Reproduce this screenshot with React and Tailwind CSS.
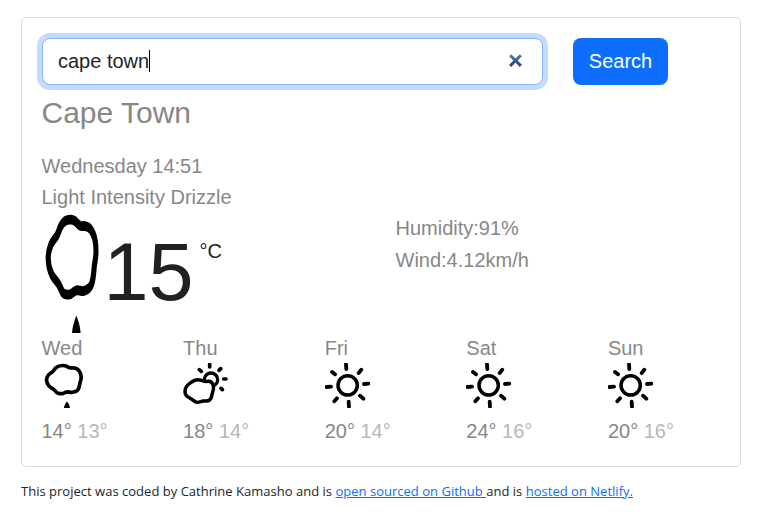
import React from "react";

function Drizzle({ className }) {
  return (
    <svg viewBox="0 0 45 45" preserveAspectRatio="none" className={className}>
      <path
        d="M20.2 2.5C17.6 2.5 15.3 3.4 13.8 4.8C12.5 6 12 7.3 11 8.3C9.6 9.6 7.6 10.4 6.4 12C5 13.8 4.4 15.2 4.5 17.2C4.6 19.6 5.4 21.2 7 23C8.6 24.7 10.6 25.4 12.2 26.8C13.8 28.2 14.4 29.9 16 30.3C17.6 30.5 19.4 30.9 21 30.4C22.8 29.9 23.8 29 25.4 28.9C27.2 28.9 28.8 29.6 30.6 29.2C33 28.8 35.2 28.2 36.2 26.3C37.3 24.4 37.5 22.8 37.8 20.8C38.1 18.6 39.2 17 39.2 14.5C39.2 12 38.6 9.5 37 7.7C35.6 6 33.6 5 31.2 4.9C29.9 4.8 29 5.1 27.7 4.8C26.2 4.4 25.6 3.7 24.2 3.1C22.8 2.6 21.5 2.4 20.2 2.5Z"
        fill="none" stroke="#000" strokeWidth="3.7" strokeLinejoin="round"
      />
      <path d="M24.9 38.4C26.6 40.6 27.8 42.5 28 45H21.8C22.1 42.5 23.4 40.6 24.9 38.4Z" fill="#000" />
    </svg>
  );
}

function Sun({ className }) {
  return (
    <svg viewBox="0 0 135 135" className={className} fill="none" stroke="#000" strokeLinecap="round">
      <circle cx="68" cy="67" r="29" strokeWidth="10.5" />
      <path strokeWidth="11.5" d="M63 4L64 18M109 20L101 30M117 63L130 62M105 98L115 107M71 116L72 131M36 106L28 115M4 72L18 71M21 27L30 34" />
    </svg>
  );
}

function PartlyCloudy({ className }) {
  return (
    <svg viewBox="0 0 135 135" className={className} fill="none" stroke="#000" strokeLinecap="round" strokeLinejoin="round">
      <circle cx="84" cy="50" r="20" strokeWidth="10" />
      <path strokeWidth="11" d="M80 4V12M113 17L108 22M122 48H129M114 76L118 80M49 20L55 25" />
      <path
        d="M43 50C33 50 28 55 20 61C11 67 6 76 6 86C6 96 12 101 20 105C28 109 32 115 41 118C48 119 54 115 61 114C68 113 73 116 80 111C87 106 85 99 88 91C91 83 93 75 91 67C88 58 82 54 74 55C66 56 64 55 58 53C53 51 48 50 43 50Z"
        fill="#fff" strokeWidth="10.5"
      />
    </svg>
  );
}

const forecast = [
  { day: "Wed", Icon: Drizzle, max: 14, min: 13 },
  { day: "Thu", Icon: PartlyCloudy, max: 18, min: 14 },
  { day: "Fri", Icon: Sun, max: 20, min: 14 },
  { day: "Sat", Icon: Sun, max: 24, min: 16 },
  { day: "Sun", Icon: Sun, max: 20, min: 16 },
];

function SearchForm() {
  return (
    <div className="flex">
      <div className="mr-[30px] flex h-[47px] w-[501px] items-center rounded-[8px] border border-[#86b7fe] bg-white pb-[2px] pl-[15.5px] pr-[18.5px] text-[#212529] shadow-[0_0_0_5px_#c2dbfe]">
        <span>cape town</span>
        <span className="h-[22px] w-px bg-black" />
        <svg viewBox="0 0 16 16" className="ml-auto h-[15px] w-[15px]">
          <defs>
            <linearGradient id="clear" x1="0" y1="0" x2="0" y2="1">
              <stop offset="0" stopColor="#4a7bc8" />
              <stop offset="1" stopColor="#253a68" />
            </linearGradient>
          </defs>
          <path d="M3.4 1.2L8 5.8L12.6 1.2L14.8 3.4L10.2 8L14.8 12.6L12.6 14.8L8 10.2L3.4 14.8L1.2 12.6L5.8 8L1.2 3.4Z" fill="url(#clear)" />
        </svg>
      </div>
      <button className="h-[47px] w-[95px] rounded-[8px] bg-[#0d6efd] pb-[2px] pl-px text-white">Search</button>
    </div>
  );
}

export default function App() {
  return (
    <div className="h-[527px] w-[770px] bg-white pl-[21px] pt-[17px] font-['Liberation_Sans',Arial,sans-serif] text-[20px] leading-[30px] text-[#878787]">
      <main className="h-[450px] w-[720px] rounded-[5px] border border-[#dadce0] py-5 pl-[19.5px]">
        <SearchForm />
        <h1 className="mt-[10px] text-[30px] leading-[36px]">Cape Town</h1>
        <div className="mt-[20px] leading-[31px]">
          <p>Wednesday 14:51</p>
          <p>Light Intensity Drizzle</p>
        </div>
        <section className="flex h-[120px]">
          <div className="flex w-[354px] items-start">
            <Drizzle className="h-[120px] w-[62px]" />
            <span className="mt-[14px] text-[81px] leading-[90px] text-[#212121]">15</span>
            <span className="ml-[6px] mt-[23px] text-[#212121]">°C</span>
          </div>
          <div className="-mt-px leading-8">
            <p>Humidity:91%</p>
            <p>Wind:4.12km/h</p>
          </div>
        </section>
        <section className="grid w-[708px] grid-cols-5">
          {forecast.map(({ day, Icon, max, min }) => (
            <div key={day}>
              <p>{day}</p>
              <Icon className="block h-[45px] w-[45px]" />
              <p className="mt-2">
                {max}° <span className="text-[#b7b7b7]">{min}°</span>
              </p>
            </div>
          ))}
        </section>
      </main>
      <footer className="mt-[14px] whitespace-nowrap font-['Open_Sans','Noto_Sans',sans-serif] text-[13px] leading-[20px] tracking-[0.015px] text-[#212529]">
        This project was coded by Cathrine Kamasho and is{" "}
        <a className="text-[#0d6efd] underline">open sourced on Github </a>
        and is <a className="text-[#0d6efd] underline">hosted on Netlify.</a>
      </footer>
    </div>
  );
}
